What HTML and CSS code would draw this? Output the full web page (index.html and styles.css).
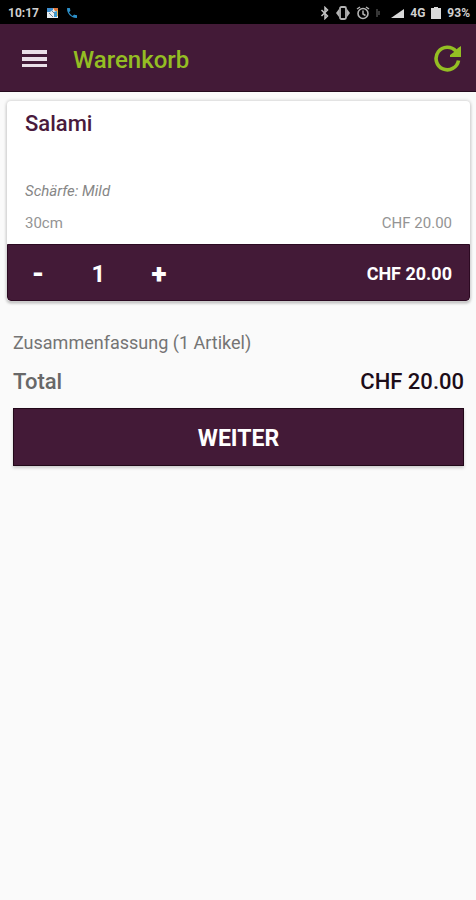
FILE: index.html
```html
<!DOCTYPE html>
<html lang="de">
<head>
<meta charset="utf-8">
<meta name="viewport" content="width=device-width, initial-scale=1">
<title>Warenkorb</title>
<link rel="stylesheet" href="styles.css">
</head>
<body>
<div class="status">
  <span class="status-time">10:17</span>
  <svg class="status-photo" width="12" height="12" viewBox="0 0 12 12" aria-hidden="true">
    <path fill="#e8eef2" d="M0 1h11v10H0z"/>
    <path fill="#3f8fd0" d="M0 1h6v2L3 5H0z"/>
    <path fill="#e0783c" d="M6 1h5v3L8 4z"/>
    <path fill="#3b9ad2" d="M7 5l3-1v6H7z"/>
    <path fill="#e6b450" d="M10 3h1v6h-1z"/>
    <path fill="none" stroke="#6f8794" d="M2 6l4 4M5 4l3 3"/>
  </svg>
  <svg class="status-call" width="10" height="10" viewBox="3 3 18 18" aria-hidden="true">
    <path fill="#2c8fc9" d="M6.600 10.800c1.400 2.800 3.800 5.100 6.600 6.600l2.200-2.200c.3-.3.700-.4 1-.2 1.100.4 2.300.6 3.600.6.600 0 1 .4 1 1V20c0 .6-.4 1-1 1C10.600 21 3 13.400 3 4c0-.6.400-1 1-1h3.500c.6 0 1 .4 1 1 0 1.300.2 2.500.6 3.600.1.300 0 .7-.2 1z"/>
  </svg>
  <div class="status-right">
    <svg width="10" height="14" viewBox="0 0 10 14" aria-hidden="true">
      <path fill="none" stroke="#c4c4c4" stroke-width="1.500" d="M1.500 4l6 6L5 12.500v-11L7.500 4l-6 6"/>
    </svg>
    <svg width="14" height="14" viewBox="0 0 14 14" aria-hidden="true">
      <rect x="4" y="1" width="6" height="12" rx="1.500" fill="none" stroke="#b4b4b4" stroke-width="1.800"/>
      <path fill="#b4b4b4" d="M3 3v8L0 7zM11 3v8l3-4z"/>
    </svg>
    <svg width="14" height="14" viewBox="0 0 14 14" aria-hidden="true">
      <circle cx="7" cy="7.500" r="5" fill="none" stroke="#b4b4b4" stroke-width="1.600"/>
      <path fill="none" stroke="#b4b4b4" stroke-width="1.500" d="M1 3l3-2M13 3l-3-2M7 4.500V8l2.500 1.500"/>
    </svg>
    <svg width="4" height="14" viewBox="0 0 4 14" aria-hidden="true">
      <path fill="none" stroke="#484848" stroke-width="1.500" d="M1 3v8M3 5v4"/>
    </svg>
    <svg class="status-signal" width="14" height="14" viewBox="0 0 14 14" aria-hidden="true">
      <path fill="#dadada" d="M1 12L14 3v9z"/>
    </svg>
    <span>4G</span>
    <svg width="10" height="14" viewBox="0 0 10 14" aria-hidden="true">
      <path fill="#dadada" d="M3 1h4v1h3v11H0V2h3z"/>
    </svg>
    <span>93%</span>
  </div>
</div>
<header class="toolbar">
  <button class="icon-button" type="button" aria-label="Menü">
    <svg width="26" height="20" viewBox="0 0 26 20" aria-hidden="true">
      <path fill="#eadfe8" d="M0 1h25v4H0zM0 8h25v4H0zM0 15h25v3H0z"/>
    </svg>
  </button>
  <h1 class="toolbar-title">Warenkorb</h1>
  <button class="icon-button" type="button" aria-label="Aktualisieren">
    <svg width="28" height="28" viewBox="0 0 28 28" aria-hidden="true">
      <path fill="none" stroke="#94be23" stroke-width="3.600" d="M22 6.200A11.300 11.300 0 1 0 24.500 15.500"/>
      <path fill="#94be23" d="M27 1v11H16V10l4-3 4-4z"/>
    </svg>
  </button>
</header>
<main>
  <article class="card">
    <div class="card-body">
      <h2 class="item-name">Salami</h2>
      <p class="item-note">Schärfe: Mild</p>
      <div class="row item-size"><span>30cm</span><span>CHF 20.00</span></div>
    </div>
    <div class="card-bar">
      <button class="step" type="button" aria-label="Weniger">-</button>
      <output class="count">1</output>
      <button class="step" type="button" aria-label="Mehr">+</button>
      <span class="item-price">CHF 20.00</span>
    </div>
  </article>
  <section class="summary">
    <p class="summary-title">Zusammenfassung (1 Artikel)</p>
    <div class="row total"><span>Total</span><strong class="total-price">CHF 20.00</strong></div>
    <button class="next" type="button">WEITER</button>
  </section>
</main>
</body>
</html>
```
FILE: styles.css
```css
* {
  box-sizing: border-box;
}

body {
  margin: 0;
  min-height: 100vh;
  background: #fafafa;
  color: #747474;
  font-family: Roboto, "Liberation Sans", sans-serif;
}

h1, h2, p {
  margin: 0;
}

button {
  margin: 0;
  padding: 0;
  border: 0;
  background: none;
  color: inherit;
  font: inherit;
}

svg {
  display: block;
  flex: none;
}

.status {
  display: flex;
  align-items: center;
  height: 24px;
  padding: 2px 6px 0 8px;
  background: #000;
  color: #d0d0d0;
  font-size: 12px;
  font-weight: 700;
}

.status-photo {
  margin-left: 8px;
}

.status-call {
  margin-left: 8px;
}

.status-right {
  display: flex;
  align-items: center;
  gap: 6px;
  margin-left: auto;
}

.status-signal {
  margin-left: 4px;
}

.toolbar {
  display: flex;
  align-items: center;
  height: 68px;
  padding: 2px 14px 0 22px;
  border-bottom: 1px solid #250a1d;
  background: #431a37;
}

.toolbar-title {
  flex: 1;
  margin-left: 25px;
  padding-top: 2px;
  color: #94be23;
  font-size: 24px;
  font-weight: 500;
}

.card {
  margin: 9px 6px 0 7px;
  border-radius: 4px;
  background: #fff;
  box-shadow: 0 0 3px 1px #d8d8d8, 0 2px 3px #aaa;
  overflow: hidden;
}

.card-body {
  padding: 10px 18px 11px;
}

.row {
  display: flex;
  justify-content: space-between;
}

.item-name {
  color: #4a1a3c;
  font-size: 22px;
  font-weight: 500;
  line-height: 26px;
}

.item-note {
  margin-top: 44px;
  color: #868686;
  font-size: 15px;
  font-style: italic;
  line-height: 20px;
}

.item-size {
  margin-top: 12px;
  color: #949494;
  font-size: 15px;
  line-height: 20px;
}

.card-bar {
  display: flex;
  align-items: center;
  height: 57px;
  padding: 2px 17px 0 16px;
  border: 1px solid #2c0a22;
  border-radius: 0 0 4px 4px;
  background: #431a37;
  color: #fff;
  font-size: 24px;
  font-weight: 700;
}

.step {
  width: 28px;
  font-size: 28px;
  font-weight: 900;
}

.count {
  width: 93px;
  text-align: center;
}

.item-price {
  margin-left: auto;
  font-size: 18px;
}

.summary {
  padding: 30px 12px 24px 13px;
}

.summary-title {
  font-size: 18px;
  line-height: 24px;
}

.total {
  margin-top: 14px;
  color: #686868;
  font-size: 22px;
  font-weight: 500;
  line-height: 26px;
}

.total-price {
  color: #1c0c18;
  font-weight: 500;
}

.next {
  display: block;
  width: 100%;
  height: 58px;
  margin-top: 13px;
  padding-top: 2px;
  border: 1px solid #210818;
  background: #431a37;
  box-shadow: 0 2px 3px #ccc;
  color: #fff;
  font-size: 23px;
  font-weight: 700;
}
```
